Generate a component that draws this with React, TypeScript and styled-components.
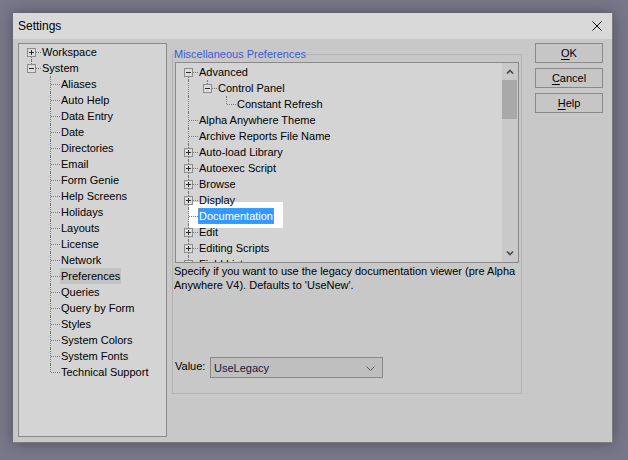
import styled, { createGlobalStyle } from "styled-components";

const GlobalStyle = createGlobalStyle`
  html, body {
    margin: 0;
  }
  body {
    background: #78788a;
    font-family: "Liberation Sans", Arial, sans-serif;
    font-size: 11px;
    color: #000;
  }
  #root {
    padding: 13px;
  }
`;

const Window = styled.div`
  width: 600px;
  height: 430px;
  box-sizing: border-box;
  display: flex;
  flex-direction: column;
  background: #c8c8c8;
  border-right: 1px solid #7c7c7c;
  border-bottom: 1px solid #7c7c7c;
  box-shadow: 0 0 14px rgba(30, 30, 45, 0.45);
`;

const TitleBar = styled.div`
  flex: none;
  height: 26px;
  display: flex;
  align-items: center;
  justify-content: space-between;
  padding: 0 10px 0 5px;
  background: #d9d9d9;
  font-size: 12px;
`;

const Body = styled.div`
  flex: 1;
  display: flex;
  align-items: flex-start;
  padding: 4px 0 0 5px;
`;

const SidePanel = styled.div`
  width: 149px;
  height: 394px;
  box-sizing: border-box;
  border: 1px solid #8a8a8a;
  background: #d4d4d4;
  padding-left: 3px;
`;

const Group = styled.fieldset`
  margin: 4px 0 0 5px;
  width: 350px;
  height: 347px;
  box-sizing: border-box;
  border: 1px solid #b3b3b3;
  padding: 0 2px;
  display: flex;
  flex-direction: column;
`;

const Legend = styled.legend`
  padding: 0;
  margin-left: -1px;
  line-height: 14px;
  color: #3a5bd6;
`;

const ListBox = styled.div`
  position: relative;
  z-index: 0;
  margin-top: 1px;
  width: 344px;
  height: 201px;
  box-sizing: border-box;
  border: 1px solid #8a8a8a;
  background: #d4d4d4;
  display: flex;
`;

const TreeArea = styled.div`
  flex: 1;
  overflow: hidden;
  padding: 1px 0 0 3px;
`;

const Row = styled.div<{ $spotlight?: boolean }>`
  position: relative;
  height: 16px;
  display: flex;
  white-space: nowrap;

  &::before {
    content: "";
    display: ${(p) => (p.$spotlight ? "block" : "none")};
    position: absolute;
    z-index: -1;
    left: 10px;
    top: -6px;
    width: 94px;
    height: 26px;
    background: #fff;
  }
`;

const Joint = styled.span<{ $up?: boolean; $down?: boolean; $branch?: boolean }>`
  position: relative;
  flex: none;
  width: 19px;
  height: 16px;

  &::before {
    content: "";
    display: ${(p) => (p.$up || p.$down ? "block" : "none")};
    position: absolute;
    left: 9px;
    top: ${(p) => (p.$up ? 0 : 8)}px;
    bottom: ${(p) => (p.$down ? 0 : 8)}px;
    border-left: 1px dotted #7a7a7a;
  }

  &::after {
    content: "";
    display: ${(p) => (p.$branch ? "block" : "none")};
    position: absolute;
    top: 8px;
    left: 10px;
    right: 0;
    border-top: 1px dotted #7a7a7a;
  }
`;

const Expander = styled.span<{ $open?: boolean }>`
  position: absolute;
  z-index: 1;
  left: 5px;
  top: 4px;
  width: 9px;
  height: 9px;
  box-sizing: border-box;
  border: 1px solid #8c8c8c;
  background: #dcdcdc;

  &::before {
    content: "";
    position: absolute;
    left: 1px;
    top: 3px;
    width: 5px;
    height: 1px;
    background: #2b2b2b;
  }

  &::after {
    content: "";
    display: ${(p) => (p.$open ? "none" : "block")};
    position: absolute;
    left: 3px;
    top: 1px;
    width: 1px;
    height: 5px;
    background: #2b2b2b;
  }
`;

type Selection = "none" | "inactive" | "active";

const Label = styled.span<{ $sel: Selection }>`
  padding: 0 1px;
  line-height: 16px;
  height: 16px;
  box-sizing: border-box;
  background: ${(p) =>
    p.$sel === "active" ? "#3399ff" : p.$sel === "inactive" ? "#c3c3c3" : "transparent"};
  color: ${(p) => (p.$sel === "active" ? "#fff" : "#000")};
  outline: ${(p) => (p.$sel === "active" ? "1px dotted #d9822b" : "none")};
  outline-offset: -1px;
`;

const Scrollbar = styled.div`
  flex: none;
  width: 16px;
  background: #c9c9c9;
  display: flex;
  flex-direction: column;
`;

const ScrollArrow = styled.div`
  flex: none;
  height: 17px;
  display: flex;
  align-items: center;
  justify-content: center;
`;

const Thumb = styled.div`
  flex: none;
  height: 39px;
  margin-right: 1px;
  background: #a9a9a9;
`;

const Track = styled.div`
  flex: 1;
`;

const Description = styled.p`
  margin: 1px 0 0 -1px;
  line-height: 14px;
  white-space: nowrap;
`;

const ValueRow = styled.div`
  margin-top: auto;
  margin-bottom: 15px;
  display: flex;
  align-items: center;
`;

const ValueLabel = styled.span`
  width: 35px;
  margin-top: -3px;
`;

const Dropdown = styled.div`
  width: 173px;
  height: 21px;
  box-sizing: border-box;
  border: 1px solid #8a8a8a;
  background: #bfbfbf;
  display: flex;
  align-items: center;
  justify-content: space-between;
  padding: 1px 7px 0 3px;
  color: #15153a;
`;

const ButtonColumn = styled.div`
  margin-left: 13px;
  display: flex;
  flex-direction: column;
  gap: 5px;
`;

const DialogButton = styled.button`
  width: 68px;
  height: 20px;
  padding: 0;
  border: 1px solid #8a8a8a;
  background: #c6c6c6;
  font-family: inherit;
  font-size: 11px;
  color: #000;

  & u {
    text-underline-offset: 2px;
  }
`;

type Guide = "pipe" | "blank";

interface TreeRow {
  label: string;
  guides: Guide[];
  up: boolean;
  down: boolean;
  exp?: "plus" | "minus";
  sel?: Selection;
  spotlight?: boolean;
}

const systemChildren = [
  "Aliases",
  "Auto Help",
  "Data Entry",
  "Date",
  "Directories",
  "Email",
  "Form Genie",
  "Help Screens",
  "Holidays",
  "Layouts",
  "License",
  "Network",
  "Preferences",
  "Queries",
  "Query by Form",
  "Styles",
  "System Colors",
  "System Fonts",
  "Technical Support",
];

const leftRows: TreeRow[] = [
  { label: "Workspace", guides: [], up: false, down: true, exp: "plus" },
  { label: "System", guides: [], up: true, down: false, exp: "minus" },
  ...systemChildren.map((label, i) => ({
    label,
    guides: ["blank"] as Guide[],
    up: true,
    down: i < systemChildren.length - 1,
    sel: (label === "Preferences" ? "inactive" : "none") as Selection,
  })),
];

const rootItem = (label: string, exp?: "plus"): TreeRow => ({
  label,
  guides: [],
  up: true,
  down: true,
  exp,
});

const rightRows: TreeRow[] = [
  { label: "Advanced", guides: [], up: false, down: true, exp: "minus" },
  { label: "Control Panel", guides: ["pipe"], up: true, down: false, exp: "minus" },
  { label: "Constant Refresh", guides: ["pipe", "blank"], up: true, down: false },
  rootItem("Alpha Anywhere Theme"),
  rootItem("Archive Reports File Name"),
  rootItem("Auto-load Library", "plus"),
  rootItem("Autoexec Script", "plus"),
  rootItem("Browse", "plus"),
  rootItem("Display", "plus"),
  { ...rootItem("Documentation"), sel: "active", spotlight: true },
  rootItem("Edit", "plus"),
  rootItem("Editing Scripts", "plus"),
  rootItem("Field List", "plus"),
];

function Tree({ rows }: { rows: TreeRow[] }) {
  return (
    <>
      {rows.map((row) => (
        <Row key={row.label} $spotlight={row.spotlight}>
          {row.guides.map((g, i) => (
            <Joint key={i} $up={g === "pipe"} $down={g === "pipe"} />
          ))}
          <Joint $up={row.up} $down={row.down} $branch>
            {row.exp && <Expander $open={row.exp === "minus"} />}
          </Joint>
          <Label $sel={row.sel ?? "none"}>{row.label}</Label>
        </Row>
      ))}
    </>
  );
}

function Chevron({ up }: { up?: boolean }) {
  return (
    <svg width="8" height="5" viewBox="0 0 8 5">
      <polyline
        points={up ? "1,4.5 4,1.5 7,4.5" : "1,0.5 4,3.5 7,0.5"}
        fill="none"
        stroke="#4a4a4a"
        strokeWidth="1.6"
      />
    </svg>
  );
}

export default function App() {
  return (
    <>
      <GlobalStyle />
      <Window>
        <TitleBar>
          <span>Settings</span>
          <svg width="10" height="10" viewBox="0 0 10 10">
            <path d="M0.5 0.5 L9.5 9.5 M9.5 0.5 L0.5 9.5" stroke="#111" strokeWidth="1" />
          </svg>
        </TitleBar>
        <Body>
          <SidePanel>
            <Tree rows={leftRows} />
          </SidePanel>
          <Group>
            <Legend>Miscellaneous Preferences</Legend>
            <ListBox>
              <TreeArea>
                <Tree rows={rightRows} />
              </TreeArea>
              <Scrollbar>
                <ScrollArrow>
                  <Chevron up />
                </ScrollArrow>
                <Thumb />
                <Track />
                <ScrollArrow>
                  <Chevron />
                </ScrollArrow>
              </Scrollbar>
            </ListBox>
            <Description>
              Specify if you want to use the legacy documentation viewer (pre Alpha
              <br />
              Anywhere V4). Defaults to 'UseNew'.
            </Description>
            <ValueRow>
              <ValueLabel>Value:</ValueLabel>
              <Dropdown>
                <span>UseLegacy</span>
                <svg width="9" height="5" viewBox="0 0 9 5">
                  <polyline points="0.5,0.5 4.5,4.5 8.5,0.5" fill="none" stroke="#5a5a5a" />
                </svg>
              </Dropdown>
            </ValueRow>
          </Group>
          <ButtonColumn>
            <DialogButton>
              <u>O</u>K
            </DialogButton>
            <DialogButton>
              <u>C</u>ancel
            </DialogButton>
            <DialogButton>
              <u>H</u>elp
            </DialogButton>
          </ButtonColumn>
        </Body>
      </Window>
    </>
  );
}
